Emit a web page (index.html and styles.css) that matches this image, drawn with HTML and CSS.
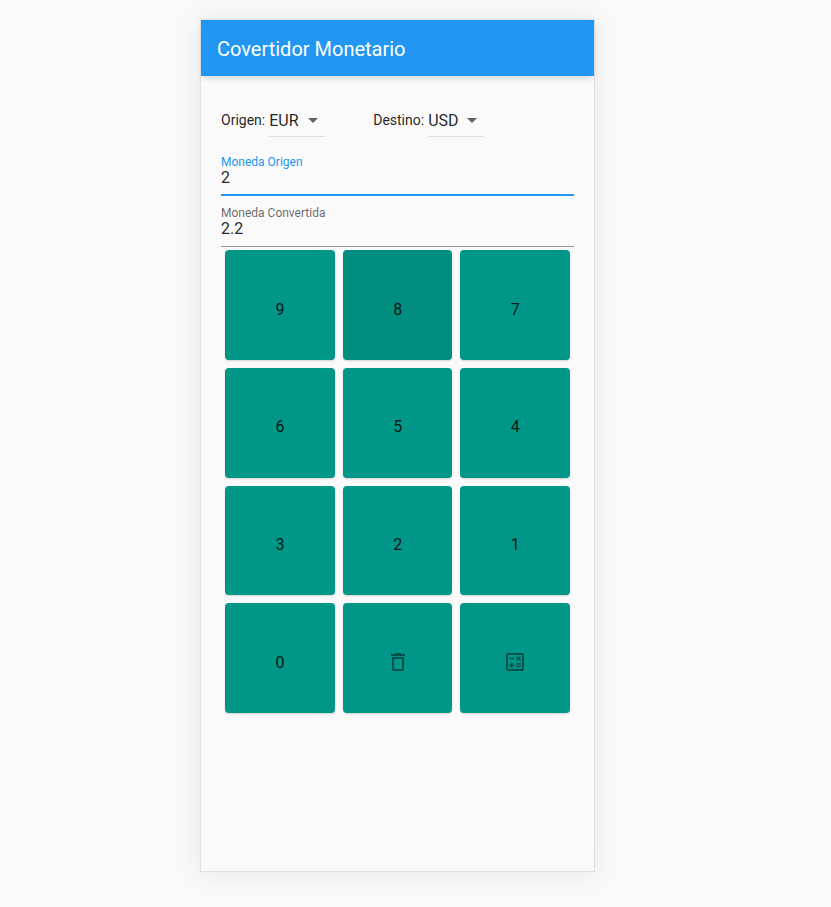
FILE: index.html
```html
<!DOCTYPE html>
<html lang="es">
<head>
<meta charset="utf-8">
<title>Covertidor Monetario</title>
<link rel="stylesheet" href="styles.css">
</head>
<body>
<main class="phone">
  <header class="appbar"><h1>Covertidor Monetario</h1></header>
  <div class="content">
    <div class="currencies">
      <div class="currency"><span>Origen:</span><div class="select">EUR<svg viewBox="0 0 24 24"><path d="M7 10l5 5 5-5z"/></svg></div></div>
      <div class="currency"><span>Destino:</span><div class="select">USD<svg viewBox="0 0 24 24"><path d="M7 10l5 5 5-5z"/></svg></div></div>
    </div>
    <div class="field focused"><label>Moneda Origen</label><div class="value">2</div></div>
    <div class="field"><label>Moneda Convertida</label><div class="value">2.2</div></div>
    <div class="keypad">
      <button>9</button><button class="hover">8</button><button>7</button>
      <button>6</button><button>5</button><button>4</button>
      <button>3</button><button>2</button><button>1</button>
      <button>0</button>
      <button aria-label="Borrar"><svg viewBox="0 0 24 24"><path d="M16 9v10H8V9h8m-1.500-6h-5l-1 1H5v2h14V4h-3.500l-1-1zM18 7H6v12c0 1.100.9 2 2 2h8c1.100 0 2-.9 2-2V7z"/></svg></button>
      <button aria-label="Calcular"><svg viewBox="0 0 24 24"><path d="M19 3H5c-1.100 0-2 .9-2 2v14c0 1.100.9 2 2 2h14c1.100 0 2-.9 2-2V5c0-1.100-.9-2-2-2zm0 16H5V5h14v14z"/><path d="M6.250 7.720h5v1.500h-5zM13 15.750h5v1.500h-5zM13 13.250h5v1.500h-5zM8 18h1.500v-2h2v-1.500h-2v-2H8v2H6V16h2zM14.090 10.950l1.410-1.410 1.410 1.410 1.060-1.060-1.410-1.420 1.410-1.410L16.910 6 15.500 7.410 14.090 6l-1.060 1.060 1.410 1.410-1.410 1.420z"/></svg></button>
    </div>
  </div>
</main>
</body>
</html>
```
FILE: styles.css
```css
* { box-sizing: border-box; }
body { margin: 0; min-height: 907px; padding: 20px 0 0 201px; background: #f8faf9; font-family: Roboto, sans-serif; color: rgba(0,0,0,.87); }
.phone { width: 393px; height: 851px; background: #fafafa; box-shadow: 0 0 0 1px #e0e2e2, 0 1px 24px rgba(0,0,0,.08); }
.appbar { height: 56px; padding: 2px 16px 0; display: flex; align-items: center; background: #2196f3; box-shadow: 0 4px 6px -1px rgba(0,0,0,.12); }
h1 { margin: 0; color: #fff; font-size: 20px; font-weight: 400; }
.content { padding: 20px; }
.currencies { height: 49px; display: flex; gap: 48px; }
.currency { display: flex; align-items: center; gap: 4px; font-size: 14px; }
.currency span { padding-bottom: 1px; }
.select { width: 56px; height: 33px; padding-top: 2px; display: flex; justify-content: space-between; align-items: center; border-bottom: 1px solid #e0e0e0; font-size: 16px; line-height: 30px; }
.select svg { width: 24px; height: 24px; margin-top: -2px; fill: #616161; }
.field { height: 51px; padding-top: 10px; border-bottom: 1px solid #949494; }
.field label { display: block; font-size: 12px; line-height: 14px; color: rgba(0,0,0,.6); }
.value { font-size: 16px; line-height: 17px; }
.focused { border-bottom: 2px solid #2196f3; }
.focused label { color: #2196f3; }
.keypad { display: grid; grid-template-columns: repeat(3, 109.670px); grid-auto-rows: 109.670px; gap: 8px; padding: 3.300px 4px; }
button { display: flex; align-items: center; justify-content: center; border: 0; border-radius: 4px; padding: 8px 0 0 .4px; background: #009688; color: rgba(0,0,0,.87); font: 16px Roboto, sans-serif; box-shadow: 0 1px 2px rgba(0,0,0,.16); }
button.hover { background: #008e81; }
button svg { width: 24px; height: 24px; fill: rgba(0,0,0,.46); }
```
